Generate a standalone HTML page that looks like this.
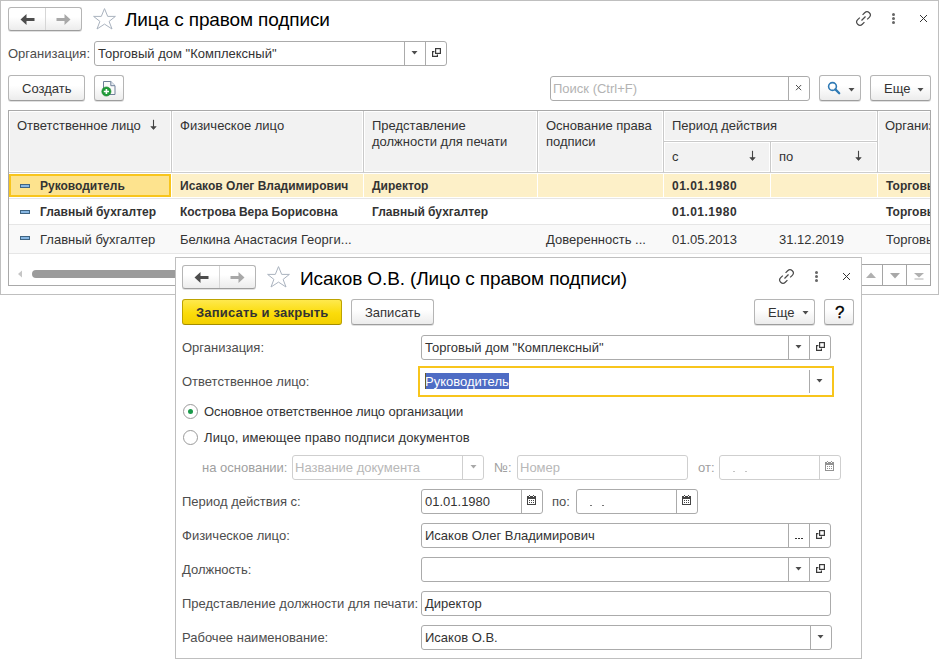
<!DOCTYPE html>
<html><head><meta charset="utf-8">
<style>
*{box-sizing:border-box;margin:0;padding:0}
html,body{width:942px;height:663px;overflow:hidden;background:#fff}
body{position:relative;font-family:"Liberation Sans",sans-serif;font-size:13px;color:#333}
.a{position:absolute}
.t{position:absolute;white-space:nowrap;line-height:15px;font-size:13px}
.lbl{color:#4d4d4d}
.win{position:absolute;border:1px solid #bfbfbf;background:#fff}
.btn{position:absolute;border:1px solid #b5b5b5;border-bottom-color:#9d9d9d;border-radius:3px;background:linear-gradient(#fff 0,#fff 40%,#ececec 100%);box-shadow:0 1px 0 rgba(0,0,0,.12)}
.inp{position:absolute;border:1px solid #ababab;border-radius:3px;background:#fff}
.dis{border-color:#cfcfcf}
.vd{position:absolute;top:0;bottom:0;width:1px;background:#ababab}
.title{position:absolute;white-space:nowrap;font-size:19px;letter-spacing:-0.12px;line-height:22px;color:#000}
.dd{position:absolute;width:0;height:0;border-left:4px solid transparent;border-right:4px solid transparent;border-top:4px solid #4d4d4d}
.hdr{position:absolute;background:#f2f2f2}
.hl{position:absolute;background:#cacaca}
.b12{font-weight:bold;font-size:12px;color:#333}
</style></head><body>

<!-- ================= BACKGROUND WINDOW ================= -->
<div class="win" style="left:0;top:0;width:939px;height:295px"></div>

<!-- nav buttons -->
<div class="btn" style="left:8px;top:7px;width:74px;height:24px"></div>
<div class="a" style="left:45px;top:8px;width:1px;height:22px;background:#d6d6d6"></div>
<svg class="a" style="left:20px;top:14px" width="16" height="12" viewBox="0 0 16 12"><path d="M0.5 5.5 L6.5 0 L6.5 4 L14.5 4 L14.5 7 L6.5 7 L6.5 11 Z" fill="#4d4d4d"/></svg>
<svg class="a" style="left:55px;top:14px" width="16" height="12" viewBox="0 0 16 12"><path d="M15.5 5.5 L9.5 0 L9.5 4 L1.5 4 L1.5 7 L9.5 7 L9.5 11 Z" fill="#a8a8a8"/></svg>
<!-- star -->
<svg class="a" style="left:88px;top:4px" width="34" height="30" viewBox="0 0 34 30"><path d="M16.5 4.6 L19.7 12.4 L27.4 12.4 L21.1 17.4 L24 25 L16.5 20.1 L9 25 L11.9 17.4 L5.6 12.4 L13.3 12.4 Z" fill="none" stroke="#aab3bf" stroke-width="1" stroke-linejoin="miter"/></svg>
<div class="title" style="left:125px;top:9px">Лица с правом подписи</div>

<!-- window icons -->
<svg class="a" style="left:855px;top:10px" width="17" height="17" viewBox="0 0 17 17"><g fill="none" stroke="#4a4a4a" stroke-width="1.3" stroke-linecap="butt" transform="translate(8.5 8.5) scale(0.92) translate(-8.5 -8.5)"><path d="M7.5 4.5 L9.8 2.2 A2.7 2.7 0 0 1 14.8 7.2 L12.5 9.5"/><path d="M9.5 12.5 L7.2 14.8 A2.7 2.7 0 0 1 2.2 9.8 L4.5 7.5"/><path d="M6.3 10.7 L10.7 6.3"/></g></svg>
<div class="a" style="left:892px;top:13px;width:3px;height:3px;border-radius:50%;background:#666"></div>
<div class="a" style="left:892px;top:17px;width:3px;height:3px;border-radius:50%;background:#666"></div>
<div class="a" style="left:892px;top:21px;width:3px;height:3px;border-radius:50%;background:#666"></div>
<svg class="a" style="left:919px;top:14px" width="9" height="9" viewBox="0 0 9 9"><path d="M1 1 L8 8 M8 1 L1 8" stroke="#333" stroke-width="1"/></svg>

<!-- org row -->
<div class="t lbl" style="left:8px;top:46px">Организация:</div>
<div class="inp" style="left:94px;top:41px;width:353px;height:25px">
  <div class="vd" style="left:309px"></div><div class="vd" style="left:330px"></div>
</div><svg class="a" style="left:411.0px;top:51px" width="7" height="4" viewBox="0 0 7 4"><path d="M0.5 0 H6.5 L3.5 3.5 Z" fill="#4d4d4d"/></svg><svg class="a" style="left:432px;top:48px" width="10" height="10" viewBox="0 0 10 10"><rect x="3.6" y="0.6" width="4.8" height="4.8" fill="none" stroke="#3a3a3a" stroke-width="1.2"/><path d="M2.4 3.6 H0.6 V8.4 H5.4 V6.6" fill="none" stroke="#3a3a3a" stroke-width="1.2"/></svg>
<div class="t" style="left:98px;top:46px">Торговый дом "Комплексный"</div>

<!-- toolbar -->
<div class="btn" style="left:8px;top:75px;width:77px;height:26px"></div>
<div class="t" style="left:22px;top:81px">Создать</div>
<div class="btn" style="left:94px;top:75px;width:30px;height:26px"></div><svg class="a" style="left:101px;top:80px" width="16" height="17" viewBox="0 0 16 17"><path d="M2.5 1.5 H9.8 L14 5.7 V14.5 H2.5 Z" fill="#fafafa" stroke="#6e8099" stroke-width="1"/><path d="M9.8 1.5 V5.7 H14" fill="#e8edf3" stroke="#6e8099" stroke-width="1"/><circle cx="5.4" cy="11.5" r="4.6" fill="#1f9b38" stroke="#17842c" stroke-width="0.6"/><path d="M5.4 8.9 V14.1 M2.8 11.5 H8" stroke="#fff" stroke-width="1.6"/></svg>

<div class="inp" style="left:550px;top:76px;width:260px;height:25px"><div class="vd" style="left:237px"></div></div><svg class="a" style="left:795px;top:84px" width="7" height="7" viewBox="0 0 7 7"><path d="M1 1 L6.2 6.2 M6.2 1 L1 6.2" stroke="#444" stroke-width="0.95"/></svg>
<div class="t" style="left:553px;top:81px;color:#b3b3b3">Поиск (Ctrl+F)</div>
<div class="btn" style="left:819px;top:75px;width:42px;height:26px"></div><svg class="a" style="left:827px;top:81px" width="14" height="14" viewBox="0 0 14 14"><circle cx="5.5" cy="5.5" r="3.9" fill="none" stroke="#2f7ab5" stroke-width="1.6"/><path d="M8.4 8.4 L12.2 12.2" stroke="#2f7ab5" stroke-width="2.3" stroke-linecap="round"/></svg><svg class="a" style="left:847.5px;top:88px" width="7" height="4" viewBox="0 0 7 4"><path d="M0.5 0 H6.5 L3.5 3.5 Z" fill="#4d4d4d"/></svg>
<div class="btn" style="left:870px;top:75px;width:61px;height:26px"></div>
<div class="t" style="left:884px;top:81px">Еще</div><svg class="a" style="left:916.5px;top:88px" width="7" height="4" viewBox="0 0 7 4"><path d="M0.5 0 H6.5 L3.5 3.5 Z" fill="#4d4d4d"/></svg>

<!-- table -->
<div class="a" style="left:8px;top:110px;width:923px;height:176px;border:1px solid #a9a9a9;background:#fff"></div>
<div class="hdr" style="left:10px;top:112px;width:920px;height:60px"></div>
<div class="a" style="left:9px;top:171px;width:921px;height:1px;background:#fff"></div>
<div class="a" style="left:9px;top:172px;width:921px;height:1px;background:#cdcdcd"></div>
<div class="a" style="left:170px;top:111px;width:1px;height:61px;background:#fff"></div><div class="hl" style="left:171px;top:111px;width:1px;height:62px"></div><div class="a" style="left:172px;top:111px;width:1px;height:61px;background:#fff"></div>
<div class="a" style="left:362px;top:111px;width:1px;height:61px;background:#fff"></div><div class="hl" style="left:363px;top:111px;width:1px;height:62px"></div><div class="a" style="left:364px;top:111px;width:1px;height:61px;background:#fff"></div>
<div class="a" style="left:536px;top:111px;width:1px;height:61px;background:#fff"></div><div class="hl" style="left:537px;top:111px;width:1px;height:62px"></div><div class="a" style="left:538px;top:111px;width:1px;height:61px;background:#fff"></div>
<div class="a" style="left:662px;top:111px;width:1px;height:61px;background:#fff"></div><div class="hl" style="left:663px;top:111px;width:1px;height:62px"></div><div class="a" style="left:664px;top:111px;width:1px;height:61px;background:#fff"></div>
<div class="a" style="left:876px;top:111px;width:1px;height:61px;background:#fff"></div><div class="hl" style="left:877px;top:111px;width:1px;height:62px"></div><div class="a" style="left:878px;top:111px;width:1px;height:61px;background:#fff"></div>
<div class="a" style="left:664px;top:140px;width:213px;height:1px;background:#fff"></div><div class="hl" style="left:664px;top:141px;width:213px;height:1px"></div><div class="a" style="left:664px;top:142px;width:213px;height:1px;background:#fff"></div>
<div class="a" style="left:769px;top:142px;width:1px;height:30px;background:#fff"></div><div class="hl" style="left:770px;top:142px;width:1px;height:31px"></div><div class="a" style="left:771px;top:142px;width:1px;height:30px;background:#fff"></div>

<div class="t" style="left:17px;top:118px">Ответственное лицо</div>
<svg class="a" style="left:149px;top:118px" width="9" height="13" viewBox="0 0 9 13"><path d="M4.5 1.8 V11" stroke="#444" stroke-width="1.1"/><path d="M1.8 8.6 L4.5 11.6 L7.2 8.6 Z" fill="#444" stroke="#444" stroke-width="0.6" stroke-linejoin="round"/></svg>
<div class="t" style="left:180px;top:118px">Физическое лицо</div>
<div class="t" style="left:372px;top:118px">Представление</div>
<div class="t" style="left:372px;top:134px">должности для печати</div>
<div class="t" style="left:546px;top:118px">Основание права</div>
<div class="t" style="left:546px;top:134px">подписи</div>
<div class="t" style="left:672px;top:118px">Период действия</div>
<div class="t" style="left:672px;top:149px">с</div>
<svg class="a" style="left:748px;top:149px" width="9" height="13" viewBox="0 0 9 13"><path d="M4.5 1.8 V11" stroke="#444" stroke-width="1.1"/><path d="M1.8 8.6 L4.5 11.6 L7.2 8.6 Z" fill="#444" stroke="#444" stroke-width="0.6" stroke-linejoin="round"/></svg>
<div class="t" style="left:779px;top:149px">по</div>
<svg class="a" style="left:854px;top:149px" width="9" height="13" viewBox="0 0 9 13"><path d="M4.5 1.8 V11" stroke="#444" stroke-width="1.1"/><path d="M1.8 8.6 L4.5 11.6 L7.2 8.6 Z" fill="#444" stroke="#444" stroke-width="0.6" stroke-linejoin="round"/></svg>
<div class="a" style="left:885px;top:118px;width:45px;height:16px;overflow:hidden"><div class="t" style="left:0;top:0">Организация</div></div>

<!-- row 1 -->
<div class="a" style="left:9px;top:174px;width:921px;height:23px;background:#fdf0c8"></div>
<div class="a" style="left:171px;top:173px;width:1px;height:24px;background:#fff"></div>
<div class="a" style="left:363px;top:173px;width:1px;height:24px;background:#fff"></div>
<div class="a" style="left:537px;top:173px;width:1px;height:24px;background:#fff"></div>
<div class="a" style="left:663px;top:173px;width:1px;height:24px;background:#fff"></div>
<div class="a" style="left:770px;top:173px;width:1px;height:24px;background:#fff"></div>
<div class="a" style="left:877px;top:173px;width:1px;height:24px;background:#fff"></div>
<div class="a" style="left:9px;top:174px;width:162px;height:23px;background:#fde38e;border:2px solid #f8c51c"></div>
<div class="a" style="left:9px;top:198px;width:921px;height:1px;background:#e6e6e6"></div>
<!-- row 2 -->
<div class="a" style="left:9px;top:224px;width:921px;height:1px;background:#e6e6e6"></div>
<!-- row 3 -->
<div class="a" style="left:9px;top:225px;width:921px;height:28px;background:#f9f9f9"></div>
<div class="a" style="left:9px;top:253px;width:921px;height:1px;background:#e6e6e6"></div>

<div class="a" style="left:20px;top:184px;width:10px;height:4px;background:#86b6e2;border:1px solid #3f6482"></div>
<div class="a" style="left:20px;top:210px;width:10px;height:4px;background:#86b6e2;border:1px solid #3f6482"></div>
<div class="a" style="left:20px;top:236px;width:10px;height:4px;background:#86b6e2;border:1px solid #3f6482"></div>

<div class="t b12" style="left:40px;top:179px">Руководитель</div>
<div class="t b12" style="left:180px;top:179px">Исаков Олег Владимирович</div>
<div class="t b12" style="left:372px;top:179px">Директор</div>
<div class="t b12" style="left:672px;top:179px;letter-spacing:0.5px">01.01.1980</div>
<div class="a" style="left:885px;top:177px;width:45px;height:18px;overflow:hidden"><div class="t b12" style="left:1px;top:2px">Торговый дом</div></div>

<div class="t b12" style="left:40px;top:205px">Главный бухгалтер</div>
<div class="t b12" style="left:180px;top:205px">Кострова Вера Борисовна</div>
<div class="t b12" style="left:372px;top:205px">Главный бухгалтер</div>
<div class="t b12" style="left:672px;top:205px;letter-spacing:0.5px">01.01.1980</div>
<div class="a" style="left:885px;top:203px;width:45px;height:18px;overflow:hidden"><div class="t b12" style="left:1px;top:2px">Торговый дом</div></div>

<div class="t" style="left:40px;top:232px">Главный бухгалтер</div>
<div class="t" style="left:180px;top:232px">Белкина Анастасия Георги...</div>
<div class="t" style="left:546px;top:232px">Доверенность ...</div>
<div class="t" style="left:672px;top:232px">01.05.2013</div>
<div class="t" style="left:779px;top:232px">31.12.2019</div>
<div class="a" style="left:885px;top:230px;width:45px;height:18px;overflow:hidden"><div class="t" style="left:1px;top:2px">Торговый дом</div></div>

<!-- scrollbar -->
<svg class="a" style="left:17px;top:270px" width="6" height="8" viewBox="0 0 6 8"><path d="M5 0.5 L1 4 L5 7.5 Z" fill="#c6c6c6"/></svg>
<div class="a" style="left:32px;top:270px;width:300px;height:8px;border-radius:4px;background:#9b9b9b"></div>
<div class="a" style="left:850px;top:264px;width:81px;height:22px;border:1px solid #a5a5a5;background:#fff"></div>
<div class="a" style="left:882px;top:264px;width:1px;height:22px;background:#a5a5a5"></div>
<div class="a" style="left:906px;top:264px;width:1px;height:22px;background:#a5a5a5"></div>
<svg class="a" style="left:866px;top:272px" width="10" height="6" viewBox="0 0 10 6"><path d="M0 6 L5 0.5 L10 6 Z" fill="#b0b0b0"/></svg>
<svg class="a" style="left:890px;top:273px" width="10" height="6" viewBox="0 0 10 6"><path d="M0 0 L10 0 L5 5.5 Z" fill="#a8a8a8"/></svg>
<svg class="a" style="left:914px;top:273px" width="10" height="7" viewBox="0 0 10 7"><path d="M0 0 L10 0 L5 4.5 Z" fill="#b0b0b0"/><path d="M0.5 6 H9.5" stroke="#b0b0b0" stroke-width="1"/></svg>

<!-- ================= DIALOG ================= -->
<div class="win" style="left:175px;top:257px;width:687px;height:402px"></div>

<!-- dialog nav -->
<div class="btn" style="left:182px;top:265px;width:74px;height:24px"></div>
<div class="a" style="left:219px;top:266px;width:1px;height:22px;background:#d6d6d6"></div>
<svg class="a" style="left:194px;top:272px" width="16" height="12" viewBox="0 0 16 12"><path d="M0.5 5.5 L6.5 0 L6.5 4 L14.5 4 L14.5 7 L6.5 7 L6.5 11 Z" fill="#4d4d4d"/></svg>
<svg class="a" style="left:229px;top:272px" width="16" height="12" viewBox="0 0 16 12"><path d="M15.5 5.5 L9.5 0 L9.5 4 L1.5 4 L1.5 7 L9.5 7 L9.5 11 Z" fill="#a8a8a8"/></svg>
<svg class="a" style="left:262px;top:262px" width="34" height="30" viewBox="0 0 34 30"><path d="M16.5 4.6 L19.7 12.4 L27.4 12.4 L21.1 17.4 L24 25 L16.5 20.1 L9 25 L11.9 17.4 L5.6 12.4 L13.3 12.4 Z" fill="none" stroke="#aab3bf" stroke-width="1" stroke-linejoin="miter"/></svg>
<div class="title" style="left:300px;top:268px">Исаков О.В. (Лицо с правом подписи)</div>
<svg class="a" style="left:778px;top:268px" width="17" height="17" viewBox="0 0 17 17"><g fill="none" stroke="#4a4a4a" stroke-width="1.3" stroke-linecap="butt" transform="translate(8.5 8.5) scale(0.92) translate(-8.5 -8.5)"><path d="M7.5 4.5 L9.8 2.2 A2.7 2.7 0 0 1 14.8 7.2 L12.5 9.5"/><path d="M9.5 12.5 L7.2 14.8 A2.7 2.7 0 0 1 2.2 9.8 L4.5 7.5"/><path d="M6.3 10.7 L10.7 6.3"/></g></svg>
<div class="a" style="left:815px;top:271px;width:3px;height:3px;border-radius:50%;background:#666"></div>
<div class="a" style="left:815px;top:275px;width:3px;height:3px;border-radius:50%;background:#666"></div>
<div class="a" style="left:815px;top:279px;width:3px;height:3px;border-radius:50%;background:#666"></div>
<svg class="a" style="left:842px;top:272px" width="9" height="9" viewBox="0 0 9 9"><path d="M1 1 L8 8 M8 1 L1 8" stroke="#333" stroke-width="1"/></svg>

<!-- dialog toolbar -->
<div class="a" style="left:182px;top:299px;width:160px;height:26px;border:1px solid #bda300;border-bottom-color:#a48d00;border-radius:3px;background:linear-gradient(#fee94e,#fbdc0a 55%,#f3d000)"></div>
<div class="t" style="left:196px;top:305px;font-weight:bold;color:#333;letter-spacing:0.2px">Записать и закрыть</div>
<div class="btn" style="left:351px;top:299px;width:83px;height:26px"></div>
<div class="t" style="left:365px;top:305px">Записать</div>
<div class="btn" style="left:754px;top:299px;width:61px;height:26px"></div>
<div class="t" style="left:768px;top:305px">Еще</div>
<svg class="a" style="left:801.5px;top:311px" width="7" height="4" viewBox="0 0 7 4"><path d="M0.5 0 H6.5 L3.5 3.5 Z" fill="#4d4d4d"/></svg>
<div class="btn" style="left:824px;top:299px;width:30px;height:26px"></div>
<div class="t" style="left:835px;top:305px;font-weight:normal;font-size:17px;line-height:16px;color:#000;-webkit-text-stroke:0.3px #000">?</div>

<!-- fields -->
<div class="t lbl" style="left:182px;top:340px">Организация:</div>
<div class="inp" style="left:421px;top:335px;width:410px;height:25px"><div class="vd" style="left:366px"></div><div class="vd" style="left:387px"></div></div>
<div class="t" style="left:425px;top:340px">Торговый дом "Комплексный"</div>
<svg class="a" style="left:795.0px;top:345px" width="7" height="4" viewBox="0 0 7 4"><path d="M0.5 0 H6.5 L3.5 3.5 Z" fill="#4d4d4d"/></svg><svg class="a" style="left:816px;top:342px" width="10" height="10" viewBox="0 0 10 10"><rect x="3.6" y="0.6" width="4.8" height="4.8" fill="none" stroke="#3a3a3a" stroke-width="1.2"/><path d="M2.4 3.6 H0.6 V8.4 H5.4 V6.6" fill="none" stroke="#3a3a3a" stroke-width="1.2"/></svg>

<div class="t lbl" style="left:182px;top:374px">Ответственное лицо:</div>
<div class="a" style="left:418px;top:366px;width:416px;height:31px;border:2px solid #f8c51c;background:#fff"></div>
<div class="a" style="left:809px;top:370px;width:1px;height:23px;background:#ababab"></div>
<div class="a" style="left:425px;top:373px;width:84px;height:16px;background:#4e6cc4"></div>
<div class="t" style="left:425px;top:374px;color:#fff">Руководитель</div><div class="a" style="left:425px;top:373px;width:1px;height:16px;background:#6b5a2a"></div>
<svg class="a" style="left:816.0px;top:379px" width="7" height="4" viewBox="0 0 7 4"><path d="M0.5 0 H6.5 L3.5 3.5 Z" fill="#4d4d4d"/></svg>

<!-- radios -->
<div class="a" style="left:183px;top:404px;width:15px;height:15px;border:1px solid #9a9a9a;border-radius:50%;background:#fff"></div>
<div class="a" style="left:188px;top:409px;width:5px;height:5px;border-radius:50%;background:#1a9a4a"></div>
<div class="t" style="left:204px;top:404px;letter-spacing:-0.1px">Основное ответственное лицо организации</div>
<div class="a" style="left:183px;top:430px;width:15px;height:15px;border:1px solid #9a9a9a;border-radius:50%;background:#fff"></div>
<div class="t" style="left:204px;top:430px;letter-spacing:0.1px">Лицо, имеющее право подписи документов</div>

<div class="t" style="left:202px;top:460px;color:#a0a0a0">на основании:</div>
<div class="inp dis" style="left:292px;top:455px;width:192px;height:25px"><div class="vd" style="left:169px;background:#cfcfcf"></div></div>
<div class="t" style="left:295px;top:460px;color:#b8b8b8">Название документа</div>
<svg class="a" style="left:469.5px;top:465px" width="7" height="4" viewBox="0 0 7 4"><path d="M0.5 0 H6.5 L3.5 3.5 Z" fill="#a8a8a8"/></svg>
<div class="t" style="left:494px;top:460px;color:#a0a0a0">№:</div>
<div class="inp dis" style="left:517px;top:455px;width:171px;height:25px"></div>
<div class="t" style="left:520px;top:460px;color:#b8b8b8">Номер</div>
<div class="t" style="left:698px;top:460px;color:#a0a0a0">от:</div>
<div class="inp dis" style="left:719px;top:455px;width:122px;height:25px"><div class="vd" style="left:99px;background:#cfcfcf"></div></div>
<div class="a" style="left:733px;top:471px;width:2px;height:1px;background:#c4c4c4"></div><div class="a" style="left:745px;top:471px;width:2px;height:1px;background:#c4c4c4"></div><svg class="a" style="left:825px;top:461px" width="9" height="10" viewBox="0 0 9 10" shape-rendering="crispEdges"><rect x="0" y="1" width="9" height="9" fill="#929292"/><rect x="1" y="4" width="7" height="5" fill="#fff"/><rect x="2" y="0" width="1" height="1" fill="#929292"/><rect x="6" y="0" width="1" height="1" fill="#929292"/><rect x="2" y="1" width="1" height="1" fill="#fff"/><rect x="6" y="1" width="1" height="1" fill="#fff"/><g fill="#929292"><rect x="2" y="5" width="1" height="1"/><rect x="4" y="5" width="1" height="1"/><rect x="6" y="5" width="1" height="1"/><rect x="2" y="7" width="1" height="1"/><rect x="4" y="7" width="1" height="1"/><rect x="6" y="7" width="1" height="1"/></g></svg>

<div class="t lbl" style="left:182px;top:494px">Период действия с:</div>
<div class="inp" style="left:421px;top:489px;width:122px;height:25px"><div class="vd" style="left:99px"></div></div>
<div class="t" style="left:425px;top:494px">01.01.1980</div><svg class="a" style="left:527px;top:495px" width="9" height="10" viewBox="0 0 9 10" shape-rendering="crispEdges"><rect x="0" y="1" width="9" height="9" fill="#444"/><rect x="1" y="4" width="7" height="5" fill="#fff"/><rect x="2" y="0" width="1" height="1" fill="#444"/><rect x="6" y="0" width="1" height="1" fill="#444"/><rect x="2" y="1" width="1" height="1" fill="#fff"/><rect x="6" y="1" width="1" height="1" fill="#fff"/><g fill="#444"><rect x="2" y="5" width="1" height="1"/><rect x="4" y="5" width="1" height="1"/><rect x="6" y="5" width="1" height="1"/><rect x="2" y="7" width="1" height="1"/><rect x="4" y="7" width="1" height="1"/><rect x="6" y="7" width="1" height="1"/></g></svg>
<div class="t lbl" style="left:552px;top:494px">по:</div>
<div class="inp" style="left:576px;top:489px;width:122px;height:25px"><div class="vd" style="left:99px"></div></div>
<div class="a" style="left:590px;top:505px;width:2px;height:1px;background:#777"></div><div class="a" style="left:602px;top:505px;width:2px;height:1px;background:#777"></div><svg class="a" style="left:682px;top:495px" width="9" height="10" viewBox="0 0 9 10" shape-rendering="crispEdges"><rect x="0" y="1" width="9" height="9" fill="#444"/><rect x="1" y="4" width="7" height="5" fill="#fff"/><rect x="2" y="0" width="1" height="1" fill="#444"/><rect x="6" y="0" width="1" height="1" fill="#444"/><rect x="2" y="1" width="1" height="1" fill="#fff"/><rect x="6" y="1" width="1" height="1" fill="#fff"/><g fill="#444"><rect x="2" y="5" width="1" height="1"/><rect x="4" y="5" width="1" height="1"/><rect x="6" y="5" width="1" height="1"/><rect x="2" y="7" width="1" height="1"/><rect x="4" y="7" width="1" height="1"/><rect x="6" y="7" width="1" height="1"/></g></svg>

<div class="t lbl" style="left:182px;top:528px">Физическое лицо:</div>
<div class="inp" style="left:421px;top:523px;width:410px;height:25px"><div class="vd" style="left:366px"></div><div class="vd" style="left:387px"></div></div>
<div class="t" style="left:425px;top:528px">Исаков Олег Владимирович</div>
<div class="a" style="left:795px;top:537.5px;width:1.6px;height:1.6px;background:#333"></div><div class="a" style="left:798px;top:537.5px;width:1.6px;height:1.6px;background:#333"></div><div class="a" style="left:801px;top:537.5px;width:1.6px;height:1.6px;background:#333"></div><svg class="a" style="left:816px;top:530px" width="10" height="10" viewBox="0 0 10 10"><rect x="3.6" y="0.6" width="4.8" height="4.8" fill="none" stroke="#3a3a3a" stroke-width="1.2"/><path d="M2.4 3.6 H0.6 V8.4 H5.4 V6.6" fill="none" stroke="#3a3a3a" stroke-width="1.2"/></svg>

<div class="t lbl" style="left:182px;top:562px">Должность:</div>
<div class="inp" style="left:421px;top:557px;width:410px;height:25px"><div class="vd" style="left:366px"></div><div class="vd" style="left:387px"></div></div>
<svg class="a" style="left:795.0px;top:567px" width="7" height="4" viewBox="0 0 7 4"><path d="M0.5 0 H6.5 L3.5 3.5 Z" fill="#4d4d4d"/></svg><svg class="a" style="left:816px;top:564px" width="10" height="10" viewBox="0 0 10 10"><rect x="3.6" y="0.6" width="4.8" height="4.8" fill="none" stroke="#3a3a3a" stroke-width="1.2"/><path d="M2.4 3.6 H0.6 V8.4 H5.4 V6.6" fill="none" stroke="#3a3a3a" stroke-width="1.2"/></svg>

<div class="t lbl" style="left:182px;top:596px">Представление должности для печати:</div>
<div class="inp" style="left:421px;top:591px;width:410px;height:25px"></div>
<div class="t" style="left:425px;top:596px">Директор</div>

<div class="t lbl" style="left:182px;top:630px">Рабочее наименование:</div>
<div class="inp" style="left:421px;top:625px;width:411px;height:25px"><div class="vd" style="left:388px"></div></div>
<div class="t" style="left:425px;top:630px">Исаков О.В.</div>
<svg class="a" style="left:817.0px;top:635px" width="7" height="4" viewBox="0 0 7 4"><path d="M0.5 0 H6.5 L3.5 3.5 Z" fill="#4d4d4d"/></svg>

</body></html>
